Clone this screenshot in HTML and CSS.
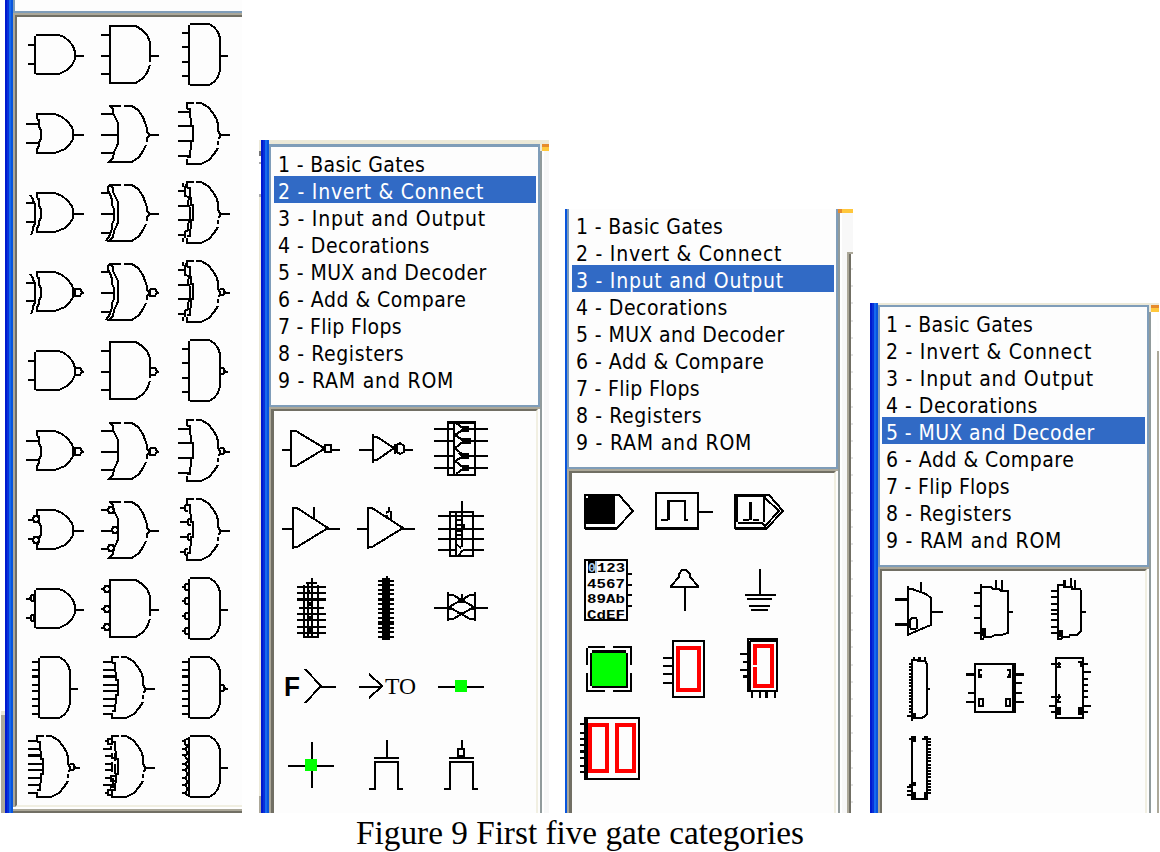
FILE: index.html
```html
<!DOCTYPE html>
<html lang="en">
<head>
<meta charset="utf-8">
<title>Figure 9 First five gate categories</title>
<link rel="stylesheet" href="styles.css">
</head>
<body>
<svg class="defs" width="0" height="0" aria-hidden="true">
<defs>
<path id="and2" d="M18 19H41L46 21L51 25L55 30L57 36V43L54 49L49 54L41 58H18M17 20V58"/>
<path id="and3" d="M17 67V10H43L49 14L54 19L57 26V46M57 49L54 57L50 62L43 67H16"/>
<path id="and4" d="M22 8H41L46 11L50 16L52 22V54L50 61L46 66L41 69H22M21 9V69"/>
<path id="or2" d="M19 24V19H37L44 22L49 26L54 32L55 36V44L52 49L47 54L37 58H19V54L21 51V47L23 44V35L21 32V25H19"/>
<path id="or3" d="M16 11H28M31 11H39L45 15L50 22L52 28L54 33V37L57 40L54 43V47M53 50L50 56L46 62L39 67H16L20 63L21 57L24 51L25 48V28L23 24L20 18L20 14L17 11"/>
<path id="or4" d="M19 14V8H26M28 8H33L40 12L45 18L49 25L50 30V36L52 39V42L50 44M50 46V50M50 53L46 59L41 65L33 69H19V64M19 14H22V22L23 24V31H25V46H23V54L22 56V62H19"/>
<path id="x2" d="M12 21L15 25V27L17 30V50L15 53V56L13 61"/>
<path id="x3" d="M17 11L15 13V17L17 20L19 26V31L21 35V46L19 50V54L17 61L13 67"/>
<path id="x4" d="M15 9V13M19 9L17 13V22L21 23L20 30L22 34V46L20 50V56L17 58V64M15 64V68"/>
<path id="in2" d="M8 29H20M8 48H20"/>
<path id="in3" d="M8 19H20M8 40H24M8 58H20"/>
<path id="in4" d="M10 17H22M10 31H23M10 46H23M10 61H22"/>
<path id="ain2" d="M10 29H17M10 48H17"/>
<path id="ain3" d="M8 19H17M8 40H17M8 58H17"/>
<path id="ain4" d="M14 17H21M14 31H21M14 46H21M14 60H21"/>
<path id="in8" d="M10 13H19M10 21H21M10 27H23M10 28H23M10 36H25M10 42H25M10 50H23M10 57H21M10 65H19"/>
<path id="ain8" d="M14 13H21M14 21H21M14 27H21M14 28H21M14 36H21M14 42H21M14 50H21M14 57H21M14 65H21"/>
<path id="out" d="M56 40H66"/>
<path id="out4" d="M52 40H60"/>
<path id="outr" d="M52 40H62"/>
<path id="bub" d="M57 36H62L64 39L62 43H57V36M63 40H66"/>
<path id="bub4" d="M52 36H55L57 39L55 42H52M56 40H60"/>
<path id="b" d="M-2 -3H2L3 0L2 3H-2L-3 0Z"/>
<path id="bs" d="M2 -3H0L-2 0L0 3H2"/>
</defs>
</svg>

<main class="figure">
<div class="shots">

<section class="shot shot-a">
  <div class="sliver"></div>
  <div class="edge"></div>
  <div class="stack">
    <div class="list-end"></div>
    <div class="palette">
      <div class="gates">
        <svg><use href="#and2"/><use href="#ain2"/><use href="#out"/></svg>
        <svg><use href="#and3"/><use href="#ain3"/><use href="#out"/></svg>
        <svg><use href="#and4"/><use href="#ain4"/><use href="#out4"/></svg>

        <svg><use href="#or2"/><use href="#in2"/><use href="#out"/></svg>
        <svg><use href="#or3"/><use href="#in3"/><use href="#out"/></svg>
        <svg><use href="#or4"/><use href="#in4"/><use href="#outr"/></svg>

        <svg><use href="#or2"/><use href="#x2"/><path d="M8 29H17M8 48H17"/><use href="#out"/></svg>
        <svg><use href="#or3"/><use href="#x3"/><path d="M8 19H17M8 40H21M8 59H17"/><use href="#out"/></svg>
        <svg><use href="#or4"/><use href="#x4"/><path d="M10 17H17M10 32H22M10 46H22M10 61H17"/><use href="#outr"/></svg>

        <svg><use href="#or2"/><use href="#x2"/><path d="M8 30H17M8 48H17M56 35V44"/><use href="#bub"/></svg>
        <svg><use href="#or3"/><use href="#x3"/><path d="M8 19H17M8 40H21M8 59H17"/><use href="#bub"/></svg>
        <svg><use href="#or4"/><use href="#x4"/><path d="M10 17H17M10 32H22M10 46H22M10 61H17"/><use href="#bub4"/><path d="M58 40H62"/></svg>

        <svg><use href="#and2"/><use href="#ain2"/><use href="#bub"/></svg>
        <svg><use href="#and3"/><use href="#ain3"/><use href="#bub"/></svg>
        <svg><use href="#and4"/><use href="#ain4"/><use href="#bub4"/></svg>

        <svg><use href="#or2"/><use href="#in2"/><path d="M56 35V44"/><use href="#bub"/></svg>
        <svg><use href="#or3"/><use href="#in3"/><use href="#bub"/></svg>
        <svg><use href="#or4"/><use href="#in4"/><use href="#bub4"/><path d="M58 40H62"/></svg>

        <svg><use href="#or2"/><use href="#b" x="18" y="28"/><use href="#b" x="18" y="49"/><path d="M10 29H15M10 48H15"/><use href="#out"/></svg>
        <svg><use href="#or3"/><use href="#b" x="18" y="19"/><use href="#b" x="22" y="39"/><use href="#b" x="18" y="57"/><path d="M8 19H15M8 40H20M8 58H15"/><use href="#out"/></svg>
        <svg><use href="#or4"/><use href="#bs" x="18" y="17"/><use href="#bs" x="21" y="31"/><use href="#bs" x="21" y="46"/><use href="#bs" x="18" y="61"/><path d="M12 17H17M12 31H20M12 46H20M12 61H17"/><use href="#outr"/></svg>

        <svg><use href="#and2"/><use href="#bs" x="14" y="28"/><use href="#bs" x="14" y="48"/><path d="M16 25V31M16 45V51M8 29H12M8 48H12"/><use href="#out"/></svg>
        <svg><use href="#and3"/><use href="#b" x="14" y="19"/><use href="#b" x="14" y="39"/><use href="#b" x="14" y="57"/><path d="M8 19H12M8 39H12M8 58H12"/><use href="#out"/></svg>
        <svg><use href="#and4"/><use href="#bs" x="18" y="17"/><use href="#bs" x="18" y="31"/><use href="#bs" x="18" y="46"/><use href="#bs" x="18" y="61"/><path d="M14 17H16M14 31H16M14 46H16M14 61H16"/><use href="#out4"/></svg>

        <svg><use href="#and4"/><use href="#ain8"/><use href="#out4"/></svg>
        <svg><use href="#or4"/><use href="#in8"/><use href="#outr"/></svg>
        <svg><use href="#and4"/><use href="#ain8"/><use href="#bub4"/></svg>

        <svg><use href="#or4"/><use href="#in8"/><use href="#bub4"/><path d="M58 40H62"/></svg>
        <svg><use href="#or4"/><path d="M12 13H15M10 21H19M12 28H19M12 36H19M12 42H19M12 50H19M10 57H19M12 65H15M15 11H19V16H15ZM18 18V22M22 25V33M19 25V29M18 30H22M19 34V44M22 36V46M25 34V45M18 48H23V53H18ZM20 50V60M15 62H19V67H15ZM17 60L21 57"/><use href="#outr"/></svg>
        <svg><use href="#and4"/><path d="M14 13H17M14 21H18M14 27H18M14 36H18M14 42H18M14 50H18M14 57H18M14 65H18M21 10L17 12V16L20 18L17 21L20 25L17 28L20 33L17 36L20 39L17 42L20 46L17 50L20 54L17 57L20 61L17 65L20 68"/><use href="#out4"/></svg>
      </div>
    </div>
    <div class="tray"></div>
  </div>
</section>

<section class="shot shot-b">
  <div class="sliver"></div>
  <div class="edge"></div>
  <div class="stack">
    <ul class="list">
      <li>1 - Basic Gates</li><li class="on">2 - Invert &amp; Connect</li><li>3 - Input and Output</li><li>4 - Decorations</li><li>5 - MUX and Decoder</li><li>6 - Add &amp; Compare</li><li>7 - Flip Flops</li><li>8 - Registers</li><li>9 - RAM and ROM</li>
    </ul>
    <div class="palette">
      <div class="gates">
        <svg viewBox="274 411 75 79"><path d="M282 450H291M291 430V467M291 431H296L324 448M291 466H296L324 449M332 450H340M325 445H331V452H325ZM323 446V451"/></svg>
        <svg viewBox="349 411 75 79"><path d="M359 450H373M373 434V463M373 437H377L394 448L377 460H373M404 450H413M395 444V454M397 445L400 443L404 446V452L400 454L397 452Z"/></svg>
        <svg viewBox="424 411 75 79"><path d="M448 422H475V475H448ZM448 423H475M454 422V475M434 429H454M434 441H454M434 456H454M434 468H454M464 429H488M464 441H488M464 456H488M464 468H488M456 423L464 429L455 435L464 441L455 448L464 456L455 461L464 468L456 474M463 427H468V431H463ZM463 439H470V443H463ZM460 454H468V458H463ZM463 466H468V470H463Z"/></svg>

        <svg viewBox="274 490 75 79"><path d="M282 529H293M293 507V549M293 508H297L328 528L297 547H293M326 529H340M314 507V518"/></svg>
        <svg viewBox="349 490 75 79"><path d="M357 529H368M368 507V549M368 508H372L403 528L372 547H368M401 529H415M389 507V511M386 513L389 511L391 512V519M384 516H388"/></svg>
        <svg viewBox="424 490 75 79"><path d="M450 512H473V556H450ZM462 501V547M456 512V556M438 516H484M438 529H484M438 539H462M462 539H484M438 550H456M463 550H484M457 520H462M457 525H462M457 531H462M457 535H462M456 544L461 548M463 550L458 556M464 524V530"/></svg>

        <svg viewBox="274 569 75 79"><path d="M312 578V637M304 585V637H318V585M306 583H317M308 583V637M297 587H326M297 593H326M297 599H326M297 600H326M299 608H324M297 614H326M297 620H326M297 627H326M297 633H326M309 590V592M310 602V606M310 616V619M310 628V632"/></svg>
        <svg viewBox="349 569 75 79"><rect class="ink" x="382" y="578" width="8" height="62"/><path d="M387 576V580M378 581H394M378 585H394M378 590H394M378 594H394M378 599H394M378 600H394M378 604H394M378 609H394M378 613H394M378 618H394M378 622H394M378 624H394M378 628H394M378 632H394M378 637H394"/></svg>
        <svg viewBox="424 569 75 79"><path d="M434 608H450M473 608H488M448 592V621M475 592V621M448 595H453L474 607M448 619H453L474 607M475 595H470L449 607M475 619H470L449 607M462 594V600M458 600H465M457 602H465M457 613H465M450 606V610M473 606V610"/></svg>

        <svg viewBox="274 648 75 79"><text class="sans" x="284" y="696" textLength="16" lengthAdjust="spacingAndGlyphs">F</text><path d="M305 669L321 686L305 703M320 687H336"/></svg>
        <svg viewBox="349 648 75 79"><text class="serif" x="385" y="694" textLength="31" lengthAdjust="spacingAndGlyphs">TO</text><path d="M359 687H382M369 674L382 686L369 698"/></svg>
        <svg viewBox="424 648 75 79"><path d="M438 687H484"/><rect class="lit" x="455" y="680" width="12" height="12"/></svg>

        <svg viewBox="274 727 75 79"><path d="M288 766H334M312 742V788"/><rect class="lit" x="305" y="759" width="12" height="12"/></svg>
        <svg viewBox="349 727 75 79"><path d="M387 740V758M374 758H399M374 762H399M375 762V789H369M398 762V789H403"/></svg>
        <svg viewBox="424 727 75 79"><path d="M462 740V748M449 758H474M449 762H474M450 762V789H444M473 762V789H478M458 749H464V756H458Z"/></svg>
      </div>
    </div>
  </div>
  <div class="side"><i class="tab"></i></div>
</section>

<section class="shot shot-c">
  <div class="edge"></div>
  <div class="stack">
    <ul class="list">
      <li>1 - Basic Gates</li><li>2 - Invert &amp; Connect</li><li class="on">3 - Input and Output</li><li>4 - Decorations</li><li>5 - MUX and Decoder</li><li>6 - Add &amp; Compare</li><li>7 - Flip Flops</li><li>8 - Registers</li><li>9 - RAM and ROM</li>
    </ul>
    <div class="palette">
      <div class="gates">
        <svg viewBox="572 473 75 79"><path d="M585 495H619L633 511L617 528H585ZM585 529H617"/><rect class="ink" x="586" y="496" width="29" height="28"/><rect class="paper" x="586" y="496" width="2" height="2"/><path class="gap" d="M586 525H613"/></svg>
        <svg viewBox="647 473 75 79"><path d="M656 493H698V529H656ZM656 528H698M661 520H668M668 520V501H685V520H688M669 501V520M698 512H713"/></svg>
        <svg viewBox="722 473 75 79"><path d="M735 495H769L783 511L767 528H735ZM737 496V522M735 496H766M735 529H767M738 523H762L765 526L779 511L764 497V522M751 502V520M750 502V520M743 520H749M753 520H759"/></svg>

        <svg viewBox="572 552 75 79"><path d="M585 560H627V620H585ZM628 574H632M628 585H632M628 595H632M628 606H632"/><rect class="ink" x="588" y="561" width="7" height="12"/><rect class="pick" x="595" y="561" width="2" height="12"/><g class="keys"><text class="pick" x="588" y="572">0</text><text x="597" y="572" textLength="28" lengthAdjust="spacingAndGlyphs">123</text><text x="587" y="587.5" textLength="38" lengthAdjust="spacingAndGlyphs">4567</text><text x="587" y="603" textLength="38" lengthAdjust="spacingAndGlyphs">89Ab</text><text x="587" y="618.5" textLength="38" lengthAdjust="spacingAndGlyphs">CdEF</text></g></svg>
        <svg viewBox="647 552 75 79"><path d="M671 586L679 577V574L682 570H686L690 574V577L698 586V587H671ZM685 587V611"/></svg>
        <svg viewBox="722 552 75 79"><path d="M760 569V595M745 595H776M747 599H772M749 606H770M751 610H768"/></svg>

        <svg viewBox="572 631 75 79"><path d="M588 647H605M613 647H632M587 648V665M587 673V691H605M613 691H631V673M631 665V647"/><rect class="ink" x="592" y="650" width="34" height="3"/><rect class="ink" x="590" y="653" width="38" height="33"/><rect class="ink" x="592" y="686" width="36" height="2"/><rect class="lit" x="592" y="653" width="34" height="33"/></svg>
        <svg viewBox="647 631 75 79"><path d="M673 641H704V697H673ZM663 658H673M663 666H673M663 674H673M663 683H673"/><path class="seg" d="M678 648H699V690H678Z"/></svg>
        <svg viewBox="722 631 75 79"><path d="M748 639H777V691H748ZM750 641H776M750 641V691M740 654H747M743 662H747M740 670H747M743 676H747M743 677H747M752 692V698M760 692V698M766 692V698M767 692V698M775 692V698"/><path class="seg" d="M755 665V646H772V686H755V667"/></svg>

        <svg viewBox="572 710 75 79"><path d="M585 718H639V779H585ZM587 718V779M580 724H584M580 733H584M580 739H584M580 745H584M580 751H584M580 752H584M580 758H584M580 766H584M580 772H584"/><path class="seg" d="M590 725H607V771H590ZM617 725H634V771H617Z"/></svg>
      </div>
    </div>
  </div>
  <div class="side"><i class="tab"></i></div>
  <div class="ruler"></div>
</section>

<section class="shot shot-d">
  <div class="edge"></div>
  <div class="stack">
    <ul class="list">
      <li>1 - Basic Gates</li><li>2 - Invert &amp; Connect</li><li>3 - Input and Output</li><li>4 - Decorations</li><li class="on">5 - MUX and Decoder</li><li>6 - Add &amp; Compare</li><li>7 - Flip Flops</li><li>8 - Registers</li><li>9 - RAM and ROM</li>
    </ul>
    <div class="palette">
      <div class="gates">
        <svg viewBox="882 571 75 79"><path d="M908 586V636M908 589H912L926 594L931 598V625L926 627L912 633L908 635M921 582V593M931 612H943M895 599H908M895 600H908M895 624H908M895 625H908M912 618H916L917 620V628L915 629H911L910 627V620Z"/></svg>
        <svg viewBox="957 571 75 79"><path d="M981 584V640M981 587H991L993 589H999L1001 591H1008V633L1001 635H995L991 637H984L983 639H981M974 593H981M974 606H981M974 618H981M974 633H981M996 580V589M1002 580V591M1008 612H1013"/><rect class="ink" x="981" y="628" width="5" height="8"/></svg>
        <svg viewBox="1032 571 75 79"><path d="M1058 640V585H1064V587H1072V589H1080L1081 591V631L1079 633L1077 635H1070L1069 637H1063L1061 639H1058M1065 580V586M1064 580V586M1071 578V588M1075 580V589M1081 612H1086M1051 591H1058M1051 597H1058M1051 604H1058M1051 610H1058M1051 614H1058M1051 620H1058M1051 627H1058M1051 633H1058"/><rect class="ink" x="1059" y="630" width="4" height="7"/></svg>

        <svg viewBox="882 650 75 79"><path d="M912 721V660H918V661H925L927 664V714L925 716L922 718H912M914 657V660M920 657V662M919 657V662M925 657V662M907 716H912M928 689H930"/><path class="comb" d="M910 663V713"/><rect class="ink" x="912" y="713" width="4" height="5"/></svg>
        <svg viewBox="957 650 75 79"><path d="M975 664H1015V712H975ZM1013 664V712M966 674H975M966 675H975M968 693H975M966 702H975M1016 674H1024M1016 675H1024M1016 683H1022M1016 693H1022M1016 702H1024M982 670H979V677H982M980 675H982M1007 670H1010V677H1007M1008 675H1010M979 699H983V706H979ZM1006 699H1010V706H1006Z"/></svg>
        <svg viewBox="1032 650 75 79"><path d="M1056 658H1083V718H1056ZM1051 664H1061M1051 697H1061M1049 706H1056M1051 712H1056M1083 664H1088M1083 672H1091M1083 679H1088M1083 685H1088M1083 691H1088M1083 697H1088M1083 706H1091M1083 712H1088M1059 662V668M1057 667H1061M1078 662H1083M1081 662V667M1059 694V699M1057 702H1061M1058 699V703"/><rect class="ink" x="1057" y="707" width="4" height="8"/><rect class="ink" x="1078" y="707" width="5" height="8"/></svg>

        <svg viewBox="882 729 75 79"><path d="M912 736V799H927V736M909 739H916M911 737H916M912 741H916M924 737H928M922 739H928M907 787H911M907 791H911M907 795H911M909 785H914"/><path class="comb" d="M929 738V796"/><rect class="ink" x="912" y="782" width="4" height="4"/><rect class="ink" x="912" y="792" width="4" height="7"/><rect class="ink" x="924" y="792" width="4" height="7"/></svg>
      </div>
    </div>
  </div>
  <div class="side"><i class="tab"></i></div>
</section>

</div>
<p class="caption">Figure 9 First five gate categories</p>
</main>
</body>
</html>
```
FILE: styles.css
```css
* { box-sizing: border-box; }
body { margin: 0; background: #fff; width: 1160px; height: 852px; overflow: hidden; }
.defs { position: absolute; }
.shots { display: flex; align-items: flex-end; height: 813px; width: 1159px; }
.shot { display: flex; flex: none; background: #fdfdfd; overflow: hidden; }
.shot-a { width: 242px; height: 813px; margin-right: 17px; }
.shot-b { width: 290px; height: 673px; margin-right: 16px; padding-top: 4px; background: linear-gradient(#ece9d8 4px, #fdfdfd 4px); }
.shot-c { width: 288px; height: 604px; margin-right: 17px; }
.shot-d { width: 289px; height: 510px; padding-top: 2px; background: linear-gradient(#ece9d8 2px, #fdfdfd 2px); }

.edge { flex: none; width: 8px; background: linear-gradient(90deg, #0019cf 2px, #0831d9 2px 4px, #166aee 4px 6px, #0855dd 6px); }
.shot-b .edge, .shot-d .edge { margin-top: -4px; }
.shot-c .edge { width: 2px; background: #0855dd; }
.sliver { flex: none; }
.shot-a .sliver { width: 5px; background: linear-gradient(90deg, #fff 1px, transparent 1px), linear-gradient(#fff 711px, #ece9d8 711px 715px, #aca899 715px); }
.shot-b .sliver { width: 2px; background: linear-gradient(#ece9d8 7px, #777 7px 12px, #fff 12px 18px, #aaa 18px 20px, #fff 20px 50px, #aaa 50px 53px, #ece9d8 53px 652px, #aca899 652px); }

.stack { display: flex; flex-direction: column; flex: none; }
.shot-a .stack { width: 229px; }
.shot-b .stack, .shot-c .stack, .shot-d .stack { width: 271px; }

.list-end { flex: none; height: 13px; border-left: 2px solid #7f9db9; border-bottom: 2px solid #7f9db9; }
.list { list-style: none; margin: 0; flex: none; border: 2px solid #7f9db9; padding: 2px 2px 0 3px; font: 21px/26px "DejaVu Sans Condensed", "DejaVu Sans", sans-serif; font-stretch: condensed; color: #000; }
.shot-b .list { height: 263px; border-top-width: 3px; }
.shot-c .list { height: 260px; border-top: 0; }
.shot-d .list { height: 262px; padding-left: 2px; }
.list li { height: 27px; padding: 3px 0 0 4px; line-height: 26px; white-space: nowrap; letter-spacing: .5px; }
.list li:nth-child(1) { letter-spacing: .35px; }
.list li:nth-child(2) { letter-spacing: .75px; }
.list li:nth-child(3) { letter-spacing: .75px; }
.list li:nth-child(5) { letter-spacing: .4px; }
.list li:nth-child(7) { letter-spacing: .3px; }
.list li:nth-child(8) { letter-spacing: .6px; }
.list li:nth-child(9) { letter-spacing: .8px; }
.list .on { background: #316ac5; color: #fff; }

.palette { flex: 1; min-height: 0; border-top: 2px solid #aca899; border-left: 2px solid #aca899; }
.gates { height: 100%; display: grid; grid-template-columns: repeat(3, 75px); grid-auto-rows: 79px; align-content: start; border-top: 2px solid #716f64; border-left: 3px solid #716f64; border-right: 2px solid #f1efe2; }
.shot-b .gates, .shot-c .gates, .shot-d .gates { margin-right: 2px; }
.shot-d .gates { border-left-width: 2px; }
.shot-a .gates { border-left-width: 2px; border-right: 0; padding-left: 1px; grid-template-rows: repeat(4, 79px) 80px; border-bottom: 2px solid #f1efe2; }
.shot-a .gates svg { margin-top: -1px; }
.tray { height: 6px; flex: none; background: linear-gradient(#fff 2px, #aca899 2px 4px, #716f64 4px); }

.gates svg { display: block; width: 75px; height: 79px; overflow: visible; fill: none; stroke: #000; stroke-width: 2; shape-rendering: crispEdges; }
.gates .ink { fill: #000; stroke: none; }
.gates .paper { fill: #fff; stroke: none; }
.gates .gap { stroke: #fff; }
.gates .lit { fill: #0f0; stroke: none; }
.gates text { fill: #000; stroke: none; }
.gates .pick { fill: #a6caf0; stroke: none; }
.gates .seg { stroke: #f00; stroke-width: 4; }
.gates .comb { stroke-width: 3; stroke-dasharray: 2 1.2; }
.sans { font: bold 28px "Liberation Sans", sans-serif; }
.serif { font: 24px "Liberation Serif", serif; }
.keys { font: bold 13px "Liberation Mono", monospace; }

.side { flex: 1; border-left: 2px solid #919b9c; background: linear-gradient(90deg, #fff 2px, #f8f8f8 2px); }
.tab { display: block; margin-left: -2px; height: 7px; background: linear-gradient(90deg, #ece9d8 2px, transparent 2px), linear-gradient(#e68b2c 3px, #ffc73c 3px); }
.shot-c .side { margin-right: -6px; }
.shot-c .tab { height: 4px; width: 15px; background: linear-gradient(90deg, #e68b2c 4px, #ffc73c 4px); }
.shot-c .ruler { width: 6px; flex: none; margin-top: 43px; border-top: 2px solid #aca899; z-index: 1; background: linear-gradient(90deg, #aca899 2px, #716f64 2px 4px, transparent 4px), repeating-linear-gradient(#fff 0 14px, #e3e3e3 14px 16px, #fff 16px 17.2px); }
.shot-d .side { background: linear-gradient(90deg, #fff 6px, transparent 6px), linear-gradient(#fdfdfd 46px, #aca899 46px); }

.caption { margin: 0; height: 39px; text-align: center; font: 33.25px/39px "Liberation Serif", "Times New Roman", serif; color: #000; }
```
